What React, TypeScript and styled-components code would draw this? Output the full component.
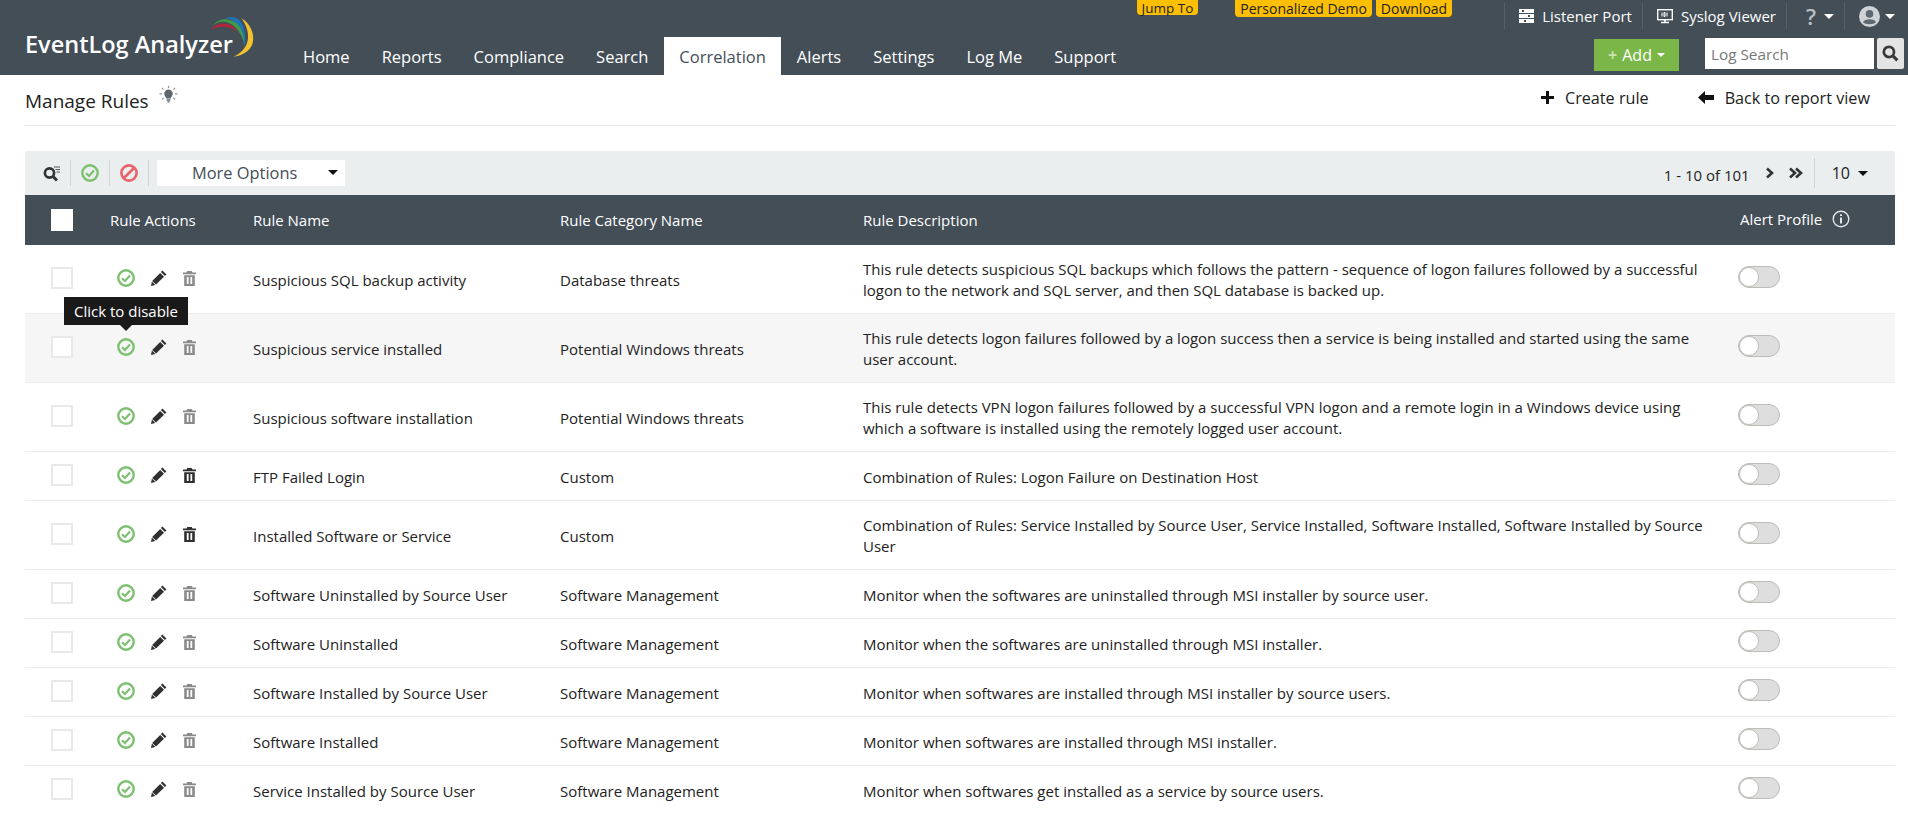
import styled, { createGlobalStyle } from 'styled-components';

const Global = createGlobalStyle`
  html, body { margin: 0; padding: 0; background: #fff; }
  body { font-family: "Open Sans", "Liberation Sans", sans-serif; color: #222; overflow: hidden; }
  #root { height: 814px; overflow: hidden; }
`;

const Header = styled.header`
  height: 75px;
  background: #434e57;
  display: grid;
  grid-template-columns: 287px 1fr auto;
  grid-template-rows: 37px 38px;
  color: #fff;
`;

const Brand = styled.div`
  grid-row: 1 / 3;
  display: flex;
  align-items: flex-start;
  padding: 5px 0 0 25px;
`;

const BrandName = styled.div`
  font-size: 23.5px;
  font-weight: 600;
  line-height: 30px;
  margin-top: 24px;
  white-space: nowrap;
`;

const LogoMark = styled.svg`
  flex: none;
  margin-left: -43px;
`;

const TopBar = styled.div`
  grid-column: 2 / 4;
  display: flex;
  justify-content: flex-end;
  align-items: flex-start;
`;

const Pill = styled.div<{ $short?: boolean }>`
  height: ${({ $short }) => ($short ? 15 : 17)}px;
  line-height: ${({ $short }) => ($short ? 16.5 : 17)}px;
  padding: 0 5px;
  background: #fdbf00;
  color: #222;
  font-size: ${({ $short }) => ($short ? 13.5 : 14)}px;
  border-radius: 0 0 4px 4px;
  margin-left: ${({ $short }) => ($short ? 0 : 4)}px;
  white-space: nowrap;
`;

const JumpGap = styled.div`
  width: 33px;
`;

const TopLinks = styled.div`
  display: flex;
  align-items: center;
  height: 32px;
  margin-left: 52px;
`;

const TopLink = styled.div`
  display: flex;
  align-items: center;
  gap: 8px;
  height: 26px;
  padding: 0 10px 0 14px;
  border-left: 1px solid #56616a;
  font-size: 15px;
  white-space: nowrap;
  &:last-child {
    gap: 5px;
    padding-right: 13px;
  }
`;

const HelpMark = styled.span`
  font-size: 22px;
  font-weight: 600;
  line-height: 26px;
  color: #b9c0c4;
  padding-left: 5px;
`;

const Caret = styled.span<{ $color?: string; $size?: number }>`
  display: inline-block;
  width: 0;
  height: 0;
  border-left: ${({ $size }) => $size ?? 5}px solid transparent;
  border-right: ${({ $size }) => $size ?? 5}px solid transparent;
  border-top: ${({ $size }) => $size ?? 5}px solid ${({ $color }) => $color ?? '#fff'};
`;

const Nav = styled.nav`
  display: flex;
  align-items: stretch;
`;

const NavItem = styled.div<{ $active?: boolean }>`
  display: flex;
  align-items: center;
  padding: 0 ${({ $active }) => ($active ? 15 : 16)}px;
  font-size: 16.5px;
  background: ${({ $active }) => ($active ? '#fff' : 'transparent')};
  color: ${({ $active }) => ($active ? '#434e57' : '#fff')};
  white-space: nowrap;
`;

const HeaderActions = styled.div`
  display: flex;
  align-items: flex-start;
  padding: 1px 4px 0 0;
`;

const AddButton = styled.div`
  width: 85px;
  height: 32px;
  margin-top: 1px;
  background: #7ab648;
  display: flex;
  align-items: center;
  justify-content: center;
  gap: 5px;
  font-size: 16px;
  margin-right: 26px;
`;

const AddPlus = styled.span`
  color: #c8e3ae;
  font-weight: 700;
`;

const SearchInput = styled.div`
  width: 169px;
  height: 31px;
  box-sizing: border-box;
  background: #fff;
  color: #777;
  font-size: 15.3px;
  line-height: 33px;
  padding-left: 6px;
`;

const SearchButton = styled.div`
  width: 27px;
  height: 31px;
  margin-left: 3px;
  background: #e4e4e4;
  display: flex;
  align-items: center;
  justify-content: center;
  border-radius: 2px;
`;

const Main = styled.main`
  padding: 0 13px 0 25px;
`;

const TitleBar = styled.div`
  height: 51px;
  box-sizing: border-box;
  display: flex;
  align-items: center;
  justify-content: space-between;
  border-bottom: 1px solid #e6e6e6;
`;

const TitleGroup = styled.div`
  display: flex;
  align-items: flex-start;
  gap: 10px;
  padding-top: 2px;
`;

const Title = styled.h1`
  margin: 0;
  font-size: 19px;
  font-weight: 400;
  color: #222;
`;

const BulbIcon = styled.svg`
  margin-top: -3px;
`;

const TitleActions = styled.div`
  display: flex;
  gap: 49px;
  padding-right: 25px;
  margin-top: -5px;
`;

const TitleAction = styled.div`
  display: flex;
  align-items: center;
  gap: 11px;
  font-size: 16.2px;
  color: #222;
`;

const Toolbar = styled.div`
  margin-top: 25px;
  height: 44px;
  box-sizing: border-box;
  background: #ebeeef;
  display: flex;
  align-items: center;
  padding: 0 0 0 18px;
`;

const ToolCell = styled.div<{ $first?: boolean }>`
  display: flex;
  align-items: center;
  justify-content: ${({ $first }) => ($first ? 'flex-start' : 'center')};
  width: ${({ $first }) => ($first ? 27 : 38)}px;
  height: 26px;
  box-sizing: content-box;
  border-right: 1px solid #cfd3d5;
`;

const OptionsSelect = styled.div`
  width: 188px;
  height: 26px;
  margin-left: 8px;
  background: #fff;
  display: flex;
  align-items: center;
  justify-content: space-between;
  padding: 0 7px 2px 35px;
  box-sizing: border-box;
  font-size: 16.4px;
  color: #434e57;
`;

const Pager = styled.div`
  margin-left: auto;
  display: flex;
  align-items: center;
  font-size: 15px;
  color: #222;
`;

const PagerCount = styled.span`
  padding-top: 3px;
`;

const PagerLinks = styled.div`
  display: flex;
  align-items: center;
  gap: 13px;
  margin-left: 15px;
  padding-right: 11px;
  height: 30px;
  border-right: 1px solid #cfd3d5;
`;

const PageSize = styled.div`
  display: flex;
  align-items: center;
  gap: 8px;
  padding: 0 27px 0 17px;
  font-size: 16px;
`;

const COLUMNS = '85px 143px 307px 303px 877px 1fr';

const HeadRow = styled.div`
  height: 50px;
  background: #434e57;
  color: #fff;
  display: grid;
  grid-template-columns: ${COLUMNS};
  align-items: center;
  font-size: 15px;
`;

const Row = styled.div<{ $hover?: boolean }>`
  display: grid;
  grid-template-columns: ${COLUMNS};
  grid-auto-rows: minmax(22px, auto);
  align-items: center;
  padding: 13px 0;
  background: ${({ $hover }) => ($hover ? '#f6f6f6' : '#fff')};
  border-bottom: 1px solid #eaeaea;
  font-size: 15px;
  line-height: 21px;
  color: #222;
`;

const CheckCell = styled.div`
  padding-left: 26px;
  display: flex;
`;

const CheckBox = styled.div<{ $head?: boolean }>`
  width: 22px;
  height: 22px;
  box-sizing: border-box;
  background: #fff;
  margin-top: ${({ $head }) => ($head ? 0 : -2)}px;
  border: 2px solid ${({ $head }) => ($head ? '#fff' : '#e9e9e9')};
`;

const ActionCell = styled.div`
  position: relative;
  display: flex;
  align-items: center;
  gap: 16px;
  padding-left: 7px;
  margin-top: -2px;
`;

const TextCell = styled.div<{ $wide?: boolean }>`
  padding: 1px ${({ $wide }) => ($wide ? 35 : 0)}px 0 0;
  margin-bottom: -1px;
`;

const Tooltip = styled.div`
  position: absolute;
  left: -46px;
  bottom: calc(100% + 13px);
  width: 124px;
  height: 28px;
  line-height: 28px;
  text-align: center;
  background: #1a1a1a;
  color: #fff;
  font-size: 15px;
  &::after {
    content: '';
    position: absolute;
    left: 56px;
    top: 28px;
    border-left: 6px solid transparent;
    border-right: 6px solid transparent;
    border-top: 6px solid #1a1a1a;
  }
`;

const Toggle = styled.div`
  width: 42px;
  height: 22px;
  box-sizing: border-box;
  border: 1px solid #bdbdb8;
  border-radius: 11px;
  background: #dedede;
  margin: -5px 0 0 -2px;
  &::before {
    content: '';
    display: block;
    width: 20px;
    height: 20px;
    box-sizing: border-box;
    border-radius: 50%;
    background: #fff;
    border: 1px solid #bdbdb8;
  }
`;

const AlertHead = styled.div`
  display: flex;
  align-items: center;
  gap: 10px;
  margin-top: -2px;
`;

const Logo = () => (
  <LogoMark width="80" height="60" viewBox="0 0 240 180">
    <path d="M105 40 C125 30 150 38 158 60 C166 82 168 105 163 128 C160 100 150 65 130 48 C122 42 112 40 105 40 Z" fill="#1f74b7" />
    <path d="M68 62 C85 38 120 35 145 60 C155 72 162 92 163 112 C150 80 135 60 112 52 C95 47 80 52 68 62 Z" fill="#3f9a4a" />
    <path d="M64 74 C75 55 105 50 125 62 C132 67 138 72 142 80 C125 65 90 58 64 74 Z" fill="#b3253a" />
    <path d="M154 40 C180 55 195 85 188 115 C180 140 155 153 130 155 C155 145 172 125 174 100 C176 80 168 58 154 40 Z" fill="#f1c22e" />
  </LogoMark>
);

const CheckCircle = () => (
  <svg width="18" height="18" viewBox="0 0 18 18" fill="none">
    <circle cx="9" cy="9" r="7.7" stroke="#7cc070" strokeWidth="2.4" />
    <path d="M5 9.2 L8 12 L13 6.4" stroke="#7cc070" strokeWidth="2.2" />
  </svg>
);

const Ban = () => (
  <svg width="18" height="18" viewBox="0 0 18 18" fill="none">
    <circle cx="9" cy="9" r="7.6" stroke="#e8626a" strokeWidth="2.6" />
    <path d="M4 14 L14 4" stroke="#e8626a" strokeWidth="2.6" />
  </svg>
);

const Pencil = () => (
  <svg width="16" height="16" viewBox="0 0 16 16" fill="#2f2f2f">
    <path d="M11.4 .6 L15.4 4.6 L13.9 6.1 L9.9 2.1 Z" />
    <path d="M9.2 3 L13 6.8 L5 14.6 L1.2 10.9 Z" />
    <path d="M.9 11.6 L4.3 15 L0 16 Z" />
  </svg>
);

const Trash = ({ dark }: { dark?: boolean }) => (
  <svg width="13" height="15" viewBox="0 0 13 15" fill={dark ? '#2f2f2f' : '#8a8a8a'}>
    <path d="M4.3 0 H8.7 L9.5 1.5 H13 V3.2 H0 V1.5 H3.5 Z" />
    <path d="M1.2 4.2 H11.8 V15 H1.2 Z M3.8 6 V13 H5.6 V6 Z M7.4 6 V13 H9.2 V6 Z" fillRule="evenodd" />
  </svg>
);

const SearchGlass = () => (
  <svg width="17" height="17" viewBox="0 0 16 16" fill="none">
    <circle cx="6.5" cy="6.5" r="4.8" stroke="#3a3a3a" strokeWidth="2.6" />
    <path d="M10 10 L14.5 14.5" stroke="#3a3a3a" strokeWidth="3" />
  </svg>
);

const FilterSearch = () => (
  <svg width="18" height="17" viewBox="0 0 18 17" fill="none">
    <circle cx="6.5" cy="8" r="4.6" stroke="#333" strokeWidth="2.6" />
    <path d="M10 11.5 L14 15.5" stroke="#333" strokeWidth="3" />
    <path d="M11 2 H17 M12.5 4.5 H17 M13.5 7 H17" stroke="#555" strokeWidth="1" />
  </svg>
);

const ListenerIcon = () => (
  <svg width="15" height="16" viewBox="0 0 15 16" fill="#fff">
    <path d="M0 1 H15 V5 H0 Z M0 6 H15 V10 H0 Z M0 11 H15 V15 H0 Z" />
    <path d="M3 2 H5 V4 H3 Z M9 7 H11 V9 H9 Z M5 12 H7 V14 H5 Z" fill="#434e57" />
  </svg>
);

const SyslogIcon = () => (
  <svg width="16" height="16" viewBox="0 0 16 16" fill="none">
    <rect x="0.7" y="1.7" width="14.6" height="10" stroke="#fff" strokeWidth="1.4" />
    <path d="M4 14.5 H12 M8 12 V14.5" stroke="#fff" strokeWidth="1.6" />
    <path d="M5 4.5 V8.5 M10 4.5 V8.5 M7 4.5 H8 V8.5 H7 Z" stroke="#fff" strokeWidth="1" />
  </svg>
);

const Avatar = () => (
  <svg width="21" height="21" viewBox="0 0 20 20">
    <circle cx="10" cy="10" r="10" fill="#cdd3d6" />
    <circle cx="10" cy="7.5" r="3.6" fill="#5d6870" />
    <path d="M3.8 15.5 C5 11.8 15 11.8 16.2 15.5 C14 18 6 18 3.8 15.5 Z" fill="#5d6870" />
  </svg>
);

const Plus = () => (
  <svg width="13" height="13" viewBox="0 0 13 13">
    <path d="M5 0 H8 V5 H13 V8 H8 V13 H5 V8 H0 V5 H5 Z" fill="#111" />
  </svg>
);

const BackArrow = () => (
  <svg width="16" height="13" viewBox="0 0 16 13">
    <path d="M0 6.5 L7 0 V4 H16 V9 H7 V13 Z" fill="#111" />
  </svg>
);

const Bulb = () => (
  <BulbIcon width="19" height="20" viewBox="0 0 18 18" fill="none">
    <path d="M5 7.8 A4 4 0 1 1 13 7.8 C13 10 11.4 10.5 11.2 12.4 H6.8 C6.6 10.5 5 10 5 7.8 Z" fill="#5f676d" />
    <path d="M7.2 13.7 H10.8 M8 15.5 H10" stroke="#5f676d" strokeWidth="1.3" />
    <path d="M9 0.2 V2.4 M2.8 2.4 L4.2 3.8 M15.2 2.4 L13.8 3.8 M0.5 8 H2.8 M15.2 8 H17.5 M3 13 L4.5 11.8 M15 13 L13.5 11.8" stroke="#8f959a" strokeWidth="1.1" />
  </BulbIcon>
);

const Chevron = ({ double }: { double?: boolean }) => (
  <svg width={double ? 15 : 10} height="12" viewBox={double ? '0 0 15 12' : '0 0 10 12'} fill="none" stroke="#333" strokeWidth="2.6">
    <path d="M2 1.5 L7 6 L2 10.5" />
    {double && <path d="M8 1.5 L13 6 L8 10.5" />}
  </svg>
);

const Info = () => (
  <svg width="18" height="18" viewBox="0 0 18 18" fill="none" stroke="#e4e7e9">
    <circle cx="9" cy="9" r="7.8" strokeWidth="1.4" />
    <path d="M9 7.5 V13.5" strokeWidth="2" />
    <path d="M9 4.2 V6" strokeWidth="2" />
  </svg>
);

const navItems = ['Home', 'Reports', 'Compliance', 'Search', 'Correlation', 'Alerts', 'Settings', 'Log Me', 'Support'];

type Rule = { name: string; category: string; description: string; custom?: boolean; hover?: boolean };

const rules: Rule[] = [
  {
    name: 'Suspicious SQL backup activity',
    category: 'Database threats',
    description:
      'This rule detects suspicious SQL backups which follows the pattern - sequence of logon failures followed by a successful logon to the network and SQL server, and then SQL database is backed up.',
  },
  {
    name: 'Suspicious service installed',
    category: 'Potential Windows threats',
    description:
      'This rule detects logon failures followed by a logon success then a service is being installed and started using the same user account.',
    hover: true,
  },
  {
    name: 'Suspicious software installation',
    category: 'Potential Windows threats',
    description:
      'This rule detects VPN logon failures followed by a successful VPN logon and a remote login in a Windows device using which a software is installed using the remotely logged user account.',
  },
  {
    name: 'FTP Failed Login',
    category: 'Custom',
    description: 'Combination of Rules: Logon Failure on Destination Host',
    custom: true,
  },
  {
    name: 'Installed Software or Service',
    category: 'Custom',
    description:
      'Combination of Rules: Service Installed by Source User, Service Installed, Software Installed, Software Installed by Source User',
    custom: true,
  },
  {
    name: 'Software Uninstalled by Source User',
    category: 'Software Management',
    description: 'Monitor when the softwares are uninstalled through MSI installer by source user.',
  },
  {
    name: 'Software Uninstalled',
    category: 'Software Management',
    description: 'Monitor when the softwares are uninstalled through MSI installer.',
  },
  {
    name: 'Software Installed by Source User',
    category: 'Software Management',
    description: 'Monitor when softwares are installed through MSI installer by source users.',
  },
  {
    name: 'Software Installed',
    category: 'Software Management',
    description: 'Monitor when softwares are installed through MSI installer.',
  },
  {
    name: 'Service Installed by Source User',
    category: 'Software Management',
    description: 'Monitor when softwares get installed as a service by source users.',
  },
];

export default function App() {
  return (
    <>
      <Global />
      <Header>
        <Brand>
          <BrandName>EventLog Analyzer</BrandName>
          <Logo />
        </Brand>
        <TopBar>
          <Pill $short>Jump To</Pill>
          <JumpGap />
          <Pill>Personalized Demo</Pill>
          <Pill>Download</Pill>
          <TopLinks>
            <TopLink><ListenerIcon />Listener Port</TopLink>
            <TopLink><SyslogIcon />Syslog Viewer</TopLink>
            <TopLink><HelpMark>?</HelpMark><Caret $size={5} /></TopLink>
            <TopLink><Avatar /><Caret $size={5} /></TopLink>
          </TopLinks>
        </TopBar>
        <Nav>
          {navItems.map((item) => (
            <NavItem key={item} $active={item === 'Correlation'}>{item}</NavItem>
          ))}
        </Nav>
        <HeaderActions>
          <AddButton><AddPlus>+</AddPlus> Add <Caret $size={4} /></AddButton>
          <SearchInput>Log Search</SearchInput>
          <SearchButton><SearchGlass /></SearchButton>
        </HeaderActions>
      </Header>
      <Main>
        <TitleBar>
          <TitleGroup>
            <Title>Manage Rules</Title>
            <Bulb />
          </TitleGroup>
          <TitleActions>
            <TitleAction><Plus />Create rule</TitleAction>
            <TitleAction><BackArrow />Back to report view</TitleAction>
          </TitleActions>
        </TitleBar>
        <Toolbar>
          <ToolCell $first><FilterSearch /></ToolCell>
          <ToolCell><CheckCircle /></ToolCell>
          <ToolCell><Ban /></ToolCell>
          <OptionsSelect>More Options <Caret $color="#111" $size={5} /></OptionsSelect>
          <Pager>
            <PagerCount>1 - 10 of 101</PagerCount>
            <PagerLinks><Chevron /><Chevron double /></PagerLinks>
            <PageSize>10 <Caret $color="#111" $size={5} /></PageSize>
          </Pager>
        </Toolbar>
        <HeadRow>
          <CheckCell><CheckBox $head /></CheckCell>
          <div>Rule Actions</div>
          <div>Rule Name</div>
          <div>Rule Category Name</div>
          <div>Rule Description</div>
          <AlertHead>Alert Profile <Info /></AlertHead>
        </HeadRow>
        {rules.map((rule) => (
          <Row key={rule.name} $hover={rule.hover}>
            <CheckCell><CheckBox /></CheckCell>
            <ActionCell>
              {rule.hover && <Tooltip>Click to disable</Tooltip>}
              <CheckCircle />
              <Pencil />
              <Trash dark={rule.custom} />
            </ActionCell>
            <TextCell>{rule.name}</TextCell>
            <TextCell>{rule.category}</TextCell>
            <TextCell $wide>{rule.description}</TextCell>
            <Toggle />
          </Row>
        ))}
      </Main>
    </>
  );
}
